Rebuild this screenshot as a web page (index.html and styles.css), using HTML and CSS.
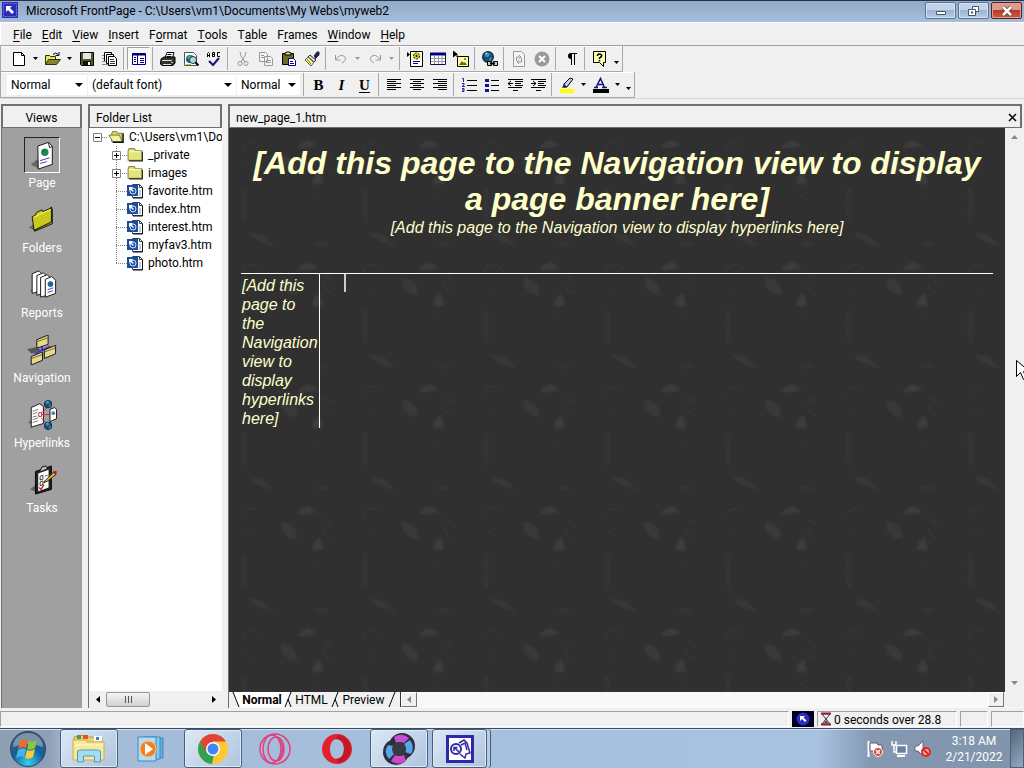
FILE: index.html
```
<!DOCTYPE html>
<html lang="en">
<head>
    <meta charset="UTF-8">
    <meta name="viewport" content="width=device-width, initial-scale=1.0">
    <title>Microsoft FrontPage</title>
    <link rel="stylesheet" href="styles.css">
</head>
<body>
    <!-- shared icons -->
    <svg class="sprite" width="0" height="0" aria-hidden="true">
        <symbol id="arrow" viewBox="0 0 5 3"><path d="M0 0h5L2.5 3z" fill="currentColor"/></symbol>
        <symbol id="fp" viewBox="0 0 16 16"><path d="M0 0h16v16H0z" fill="#2c2cb8"/><path d="M1.500 1.500h13v13h-13z" fill="none" stroke="#7474dc" stroke-dasharray="2 1"/><path d="M4 4h6L8 6l4 4-2 2-4-4-2 2z" fill="#fff"/></symbol>
        <symbol id="folder" viewBox="0 0 16 14"><path d="M1 12V3l1-2h5l1 2h6v9z" fill="#e4e47c" stroke="#8c8c3c"/><path d="M2 4h11" stroke="#ffffd0"/><path d="M2 12.500h12.500V4" fill="none" stroke="#222"/></symbol>
        <symbol id="folder-open" viewBox="0 0 18 14"><path d="M4 12V3l1-2h4l1 2h5v9z" fill="#d8d870" stroke="#777730"/><path d="M1 5h11l3 7H5z" fill="#f2f2a0" stroke="#777730"/><path d="M5 12.500h11V3" fill="none" stroke="#111" stroke-width="1.500"/></symbol>
        <symbol id="htm" viewBox="0 0 17 16"><path d="M5.500 1.500h7l3 3v10h-10z" fill="#fff" stroke="#345"/><path d="M12.500 1.500v3h3" fill="none" stroke="#345"/><path d="M15.500 5v10H6" fill="none" stroke="#111"/><path d="M0 2h11v11H0z" fill="#1c4c9c"/><circle cx="6" cy="8" r="3" fill="none" stroke="#d8e8ff"/><path d="M2 4h4L4.500 5.500 7 8 6 9 3.500 6.500 2 8z" fill="#fff"/><path d="M12 8h2M12 10h2M12 12h2" stroke="#7898c8"/></symbol>
        <symbol id="globe" viewBox="0 0 10 10"><circle cx="5" cy="5" r="4.500" fill="#174a80" stroke="#102a44"/><path d="M2 3l3-2 2 2-2 2H3zM6 6l2-1v2L6 9z" fill="#3a90a0"/><path d="M3 2.500l1-1" stroke="#cff"/></symbol>
    </svg>

    <header class="titlebar">
        <svg class="app-icon" viewBox="0 0 16 16"><use href="#fp"/></svg>
        <h1>Microsoft FrontPage - C:\Users\vm1\Documents\My Webs\myweb2</h1>
        <div class="window-buttons">
            <button aria-label="Minimize"><svg width="12" height="12"><path d="M1.500 6.500h9v3h-9z" fill="#fff" stroke="#45566e"/></svg></button>
            <button aria-label="Restore"><svg width="13" height="12"><path d="M5.500 1.500h6v5h-6z" fill="#fff" stroke="#45566e"/><path d="M1.500 4.500h7v6h-7z" fill="#fff" stroke="#45566e"/><path d="M4 7.500h2" stroke="#45566e" stroke-width="2"/></svg></button>
            <button class="close" aria-label="Close"><svg width="12" height="12"><path d="M2 2l8 8M10 2l-8 8" stroke="#632" stroke-width="4"/><path d="M2 2l8 8M10 2l-8 8" stroke="#fff" stroke-width="2.500"/></svg></button>
        </div>
    </header>

    <nav class="menubar">
        <button><u>F</u>ile</button>
        <button><u>E</u>dit</button>
        <button><u>V</u>iew</button>
        <button><u>I</u>nsert</button>
        <button>F<u>o</u>rmat</button>
        <button><u>T</u>ools</button>
        <button>T<u>a</u>ble</button>
        <button>F<u>r</u>ames</button>
        <button><u>W</u>indow</button>
        <button><u>H</u>elp</button>
    </nav>

    <div class="toolbars">
        <div class="toolbar">
            <button class="tool" aria-label="New page"><svg viewBox="0 0 16 16"><path d="M2.500 1.500h8l3 3v10h-11z" fill="#fff" stroke="#000"/><path d="M10.500 1.500v3h3" fill="none" stroke="#000"/></svg></button>
            <button class="drop" aria-label="New options"><svg><use href="#arrow"/></svg></button>
            <button class="tool" aria-label="Open"><svg viewBox="0 0 16 16"><path d="M.5 13.500v-9h4l1 1h5v3" fill="#e6e65a" stroke="#333300"/><path d="M.5 13.500l3-5h12l-4 5z" fill="#85852a" stroke="#333300"/><path d="M8 3.500q3-3 5 0M14 1v3.500h-3.500" fill="none" stroke="#000"/></svg></button>
            <button class="drop" aria-label="Open options"><svg><use href="#arrow"/></svg></button>
            <button class="tool" aria-label="Save"><svg viewBox="0 0 16 16"><path d="M1.500 1.500h13v13h-12l-1-1z" fill="#55552a" stroke="#000"/><path d="M4 2h8v6H4z" fill="#e4e4e4"/><path d="M4 10h8v4H4z" fill="#111"/><path d="M9 11h2v3H9z" fill="#fff"/></svg></button>
            <button class="tool" aria-label="Publish"><svg viewBox="0 0 16 16"><path d="M2.500 1.500h7v9h-7z" fill="#fff" stroke="#000"/><path d="M4.500 3.500h7v9h-7z" fill="#fff" stroke="#000"/><path d="M6.500 5.500h6l2 2v7h-8z" fill="#fff" stroke="#000"/><path d="M8 8.500h4M8 10.500h5M8 12.500h5" stroke="#335"/><path d="M0 4.500h2M0 7.500h2M0 10.500h4M0 13.500h6" stroke="#888"/></svg></button>
            <span class="sep"></span>
            <button class="tool pressed" aria-label="Folder list"><svg viewBox="0 0 16 16"><path d="M1.500 2.500h13v11h-13z" fill="#fff" stroke="#000080"/><path d="M1 3.500h14" stroke="#000080" stroke-width="2"/><path d="M6.500 4v9M3 6.500h2M3 8.500h2M3 10.500h2M9 7.500h4M9 9.500h4M9 11.500h4" stroke="#000080"/></svg></button>
            <span class="sep"></span>
            <button class="tool" aria-label="Print"><svg viewBox="0 0 16 16"><path d="M5 7l2-5.500h7L12.500 7" fill="#fff" stroke="#000"/><path d="M7.500 3.500h4M7 5.500h4" stroke="#000"/><path d="M1 8l3-2h11v6l-2 2.500H2L.5 13z" fill="#333" stroke="#000"/><path d="M2 9.500h10M3 13.500h8" stroke="#ddd"/><path d="M11 11.500h2" stroke="#dd0"/></svg></button>
            <button class="tool" aria-label="Preview in browser"><svg viewBox="0 0 16 16"><path d="M1.500 1.500h9l3 3v10h-12z" fill="#fff" stroke="#555"/><circle cx="7" cy="8" r="4" fill="#176080"/><path d="M4 6l3-2 2 3-3 2z" fill="#3ab090"/><circle cx="10" cy="9" r="3.500" fill="#a8dce4" stroke="#333"/><path d="M12.500 11.500l3 3" stroke="#000" stroke-width="2"/><path d="M3 13.500h5" stroke="#bb4"/></svg></button>
            <button class="tool" aria-label="Spelling"><svg viewBox="0 0 16 16"><path d="M1.500 6V2.500l1-1 1 1V6M1.500 4.500h2M6.500 1.500v4h2v-4zM6.500 3.500h2M14 1.500h-2.500v4H14" fill="none" stroke="#000"/><path d="M3 10l4 4 6-7" fill="none" stroke="#15157a" stroke-width="2"/></svg></button>
            <span class="sep"></span>
            <button class="tool off" aria-label="Cut"><svg viewBox="0 0 16 16"><g fill="none" stroke="#999"><path d="M5 1l1 4 4 6M11 1l-1 4-4 6"/><circle cx="5" cy="12.500" r="2"/><circle cx="11" cy="12.500" r="2"/></g></svg></button>
            <button class="tool off" aria-label="Copy"><svg viewBox="0 0 16 16"><path d="M1.500 1.500h6l2 2v7h-8zM6.500 5.500h6l2 2v7h-8zM3 4.500h3M3 6.500h3M8 9.500h5M8 11.500h5" fill="#f4f4f4" stroke="#999"/></svg></button>
            <button class="tool" aria-label="Paste"><svg viewBox="0 0 16 16"><path d="M1.500 2.500h11v11h-11z" fill="#6b6b28" stroke="#000"/><path d="M4 4V2l2-1h2l2 1v2z" fill="#dddd80" stroke="#000"/><path d="M7.500 7.500h5l2 2v5h-7z" fill="#fff" stroke="#000080"/><path d="M9 10.500h3M9 12.500h4" stroke="#000080"/></svg></button>
            <button class="tool" aria-label="Format painter"><svg viewBox="0 0 16 16"><path d="M10 5l3-4h2v3l-4 4" fill="#224" stroke="#224"/><path d="M6 4l6 5-2 2-6-5z" fill="#ddd" stroke="#333"/><path d="M4 6l6 5-3 4-6-6z" fill="#ffff8a" stroke="#555"/><path d="M3 8l4 5M5 7l4 4" stroke="#777730"/></svg></button>
            <span class="sep"></span>
            <button class="tool off" aria-label="Undo"><svg viewBox="0 0 16 16"><path d="M2.500 4v5h5M3 8q5-6 9-2 2 3-3 6" fill="none" stroke="#999"/></svg></button>
            <button class="drop off" aria-label="Undo list"><svg><use href="#arrow"/></svg></button>
            <button class="tool off" aria-label="Redo"><svg viewBox="0 0 16 16"><path d="M13.500 4v5h-5M13 8Q8 2 4 6q-2 3 3 6" fill="none" stroke="#999"/></svg></button>
            <button class="drop off" aria-label="Redo list"><svg><use href="#arrow"/></svg></button>
            <span class="sep"></span>
            <button class="tool" aria-label="Insert component"><svg viewBox="0 0 16 16"><path d="M3.500.5h12v15h-12z" fill="#fff" stroke="#000"/><path d="M0 1l3 2.500L0 6z"/><path d="M5 2h9v6H5z" fill="#ffff90"/><circle cx="9.500" cy="5" r="3" fill="#dddd20" stroke="#000" stroke-dasharray="2 1"/><circle cx="9.500" cy="5" r="1"/><path d="M6 10.500h7M6 12.500h5" stroke="#000080"/></svg></button>
            <button class="tool" aria-label="Insert table"><svg viewBox="0 0 16 16"><path d="M.5 2.500h15v11H.5z" fill="#fff" stroke="#111144"/><path d="M0 3h16" stroke="#000080" stroke-width="3"/><path d="M1 7.500h14M1 10.500h14M4.500 5v8M8.500 5v8M12 5v8" stroke="#999"/></svg></button>
            <button class="tool" aria-label="Insert picture"><svg viewBox="0 0 16 16"><path d="M0 0l4 3-4 3zM4 3v3" stroke="#000"/><path d="M4.500 5.500h11v10h-11z" fill="#ffffa0" stroke="#000"/><path d="M6 14l3-4 2 2 1-1 2 3z" fill="#666622"/><circle cx="12" cy="8" r="1" fill="#666622"/></svg></button>
            <span class="sep"></span>
            <button class="tool" aria-label="Hyperlink"><svg viewBox="0 0 16 16"><use href="#globe" x="0" y="0" width="12" height="12"/><path d="M5.500 10.500h4v4h-4zM11.500 10.500h4v4h-4z" fill="#ccc" stroke="#000"/><path d="M8 12.500h5" stroke="#000" stroke-width="2"/></svg></button>
            <span class="sep"></span>
            <button class="tool off" aria-label="Refresh"><svg viewBox="0 0 16 16"><path d="M2.500.5h8l3 3v12h-11z" fill="#f4f4f4" stroke="#999"/><path d="M5.500 10V6h4M8 4l2 2-2 2M10.500 7v4h-4M8 9l-2 2 2 2" fill="none" stroke="#999"/></svg></button>
            <button class="tool off" aria-label="Stop"><svg viewBox="0 0 16 16"><circle cx="8" cy="8" r="7.500" fill="#999"/><path d="M5 5l6 6M11 5l-6 6" stroke="#fff" stroke-width="2"/></svg></button>
            <span class="sep"></span>
            <button class="tool" aria-label="Show all"><svg viewBox="0 0 16 16"><path d="M7 2h7v1H7z"/><path d="M8 2a3 3 0 000 6z"/><path d="M8.500 2v12M11.500 2v12" stroke="#000"/></svg></button>
            <span class="sep"></span>
            <button class="tool" aria-label="Help"><svg viewBox="0 0 16 16"><path d="M1.500.500h12v11h-2v4l-4-4h-6z" fill="#ffffb0" stroke="#000"/><path d="M5.500 5V4q2-2 4 0 1 1-2 3V8M7.500 9v1.500" fill="none" stroke="#000" stroke-width="1.500"/></svg></button>
            <button class="drop more" aria-label="More buttons"><svg><use href="#arrow"/></svg></button>
        </div>

        <div class="toolbar">
            <label class="combo style"><select aria-label="Style"><option>Normal</option></select></label>
            <label class="combo font"><select aria-label="Font"><option>(default font)</option></select></label>
            <label class="combo size"><select aria-label="Font size"><option>Normal</option></select></label>
            <span class="sep"></span>
            <button class="tool letter"><b>B</b></button>
            <button class="tool letter"><i>I</i></button>
            <button class="tool letter"><u>U</u></button>
            <span class="sep"></span>
            <button class="tool" aria-label="Align left"><svg viewBox="0 0 16 16"><path d="M1 2.500h14M1 4.500h9M1 6.500h14M1 8.500h9M1 10.500h14M1 12.500h9" stroke="#000"/></svg></button>
            <button class="tool" aria-label="Center"><svg viewBox="0 0 16 16"><path d="M1 2.500h14M4 4.500h8M1 6.500h14M4 8.500h8M1 10.500h14M4 12.500h8" stroke="#000"/></svg></button>
            <button class="tool" aria-label="Align right"><svg viewBox="0 0 16 16"><path d="M1 2.500h14M6 4.500h9M1 6.500h14M6 8.500h9M1 10.500h14M6 12.500h9" stroke="#000"/></svg></button>
            <span class="sep"></span>
            <button class="tool" aria-label="Numbering"><svg viewBox="0 0 16 16"><path d="M6 3.500h10M6 8.500h10M6 13.500h10" stroke="#000"/><path d="M1 1.500h1.500V5M1 6.500h2v1.500l-2 1.500h3M1 11.500h2v3H1M1 13h2" fill="none" stroke="#2525a8"/></svg></button>
            <button class="tool" aria-label="Bullets"><svg viewBox="0 0 16 16"><path d="M7 3.500h8M7 8.500h8M7 13.500h8" stroke="#000"/><path d="M1 2h4v3H1zM1 7h4v3H1zM1 12h4v3H1z" fill="#15158a"/></svg></button>
            <button class="tool" aria-label="Decrease indent"><svg viewBox="0 0 16 16"><path d="M1 2.500h15M8 4.500h8M8 6.500h6M8 8.500h8M1 10.500h14M6 13.500h5" stroke="#000"/><path d="M1 6.500h5M4 4L1 6.500 4 9" fill="none" stroke="#000"/></svg></button>
            <button class="tool" aria-label="Increase indent"><svg viewBox="0 0 16 16"><path d="M1 2.500h15M8 4.500h8M8 6.500h6M8 8.500h8M1 10.500h14M6 13.500h5" stroke="#000"/><path d="M1 6.500h5M3 4l3 2.500L3 9" fill="none" stroke="#000"/></svg></button>
            <span class="sep"></span>
            <button class="tool" aria-label="Highlight"><svg viewBox="0 0 16 16"><path d="M1 12h14v4H1z" fill="#ffff00"/><path d="M5 7l6-6 3 1-6 8H5z" fill="#c8c8e8" stroke="#000"/><path d="M5 7l3 3-5 1z" fill="#222244"/></svg></button>
            <button class="drop" aria-label="Highlight colors"><svg><use href="#arrow"/></svg></button>
            <button class="tool" aria-label="Font color"><svg viewBox="0 0 16 16"><path d="M0 12h16v4H0z"/><path d="M3 10.500l4.500-9 4 9M5 7.500h5M1 10.500h4M9 10.500h5" fill="none" stroke="#15157a" stroke-width="1.500"/></svg></button>
            <button class="drop" aria-label="Font colors"><svg><use href="#arrow"/></svg></button>
            <button class="drop more" aria-label="More buttons"><svg><use href="#arrow"/></svg></button>
        </div>
    </div>

    <main class="workspace">
        <aside class="views">
            <h2 class="pane-title">Views</h2>
            <button class="view active"><svg viewBox="0 0 32 32"><path d="M4 26l8-6v10z" fill="#666"/><path d="M11.500 6.500L23 2.500l4 4V26l-15 5z" fill="#fff" stroke="#111"/><path d="M23 3l1 5 3-1" fill="none" stroke="#111"/><circle cx="19" cy="13" r="4" fill="#208850"/><path d="M16 12l3-2 1 3z" fill="#225aa8"/><path d="M14 22l10-3M14 25l7-2" stroke="#3a3aa8"/></svg>Page</button>
            <button class="view"><svg viewBox="0 0 32 32"><path d="M2 24l8-5v9z" fill="#666"/><path d="M6.500 13L24 6l2-4 1 3v15L8 28z" fill="#8e8e10" stroke="#111"/><path d="M5.500 12.500L9 11l1-3 6-3 1 2 9-4v15L7.500 27z" fill="#c8c81e" stroke="#111"/><path d="M7 13l18-8" stroke="#ffff70"/></svg>Folders</button>
            <button class="view"><svg viewBox="0 0 32 32"><path d="M3 22l8-5v8z" fill="#666"/><g fill="#fff" stroke="#111"><path d="M5.500 4l7-3 3 3v18l-10 3z"/><path d="M10.500 6l7-3 3 3v18l-10 3z"/><path d="M14.500 8l7-3 3 3v18l-10 3z"/><path d="M19.500 10l7-3 4 4v14l-11 4z"/></g><circle cx="25" cy="15" r="3" fill="#2860a0"/><path d="M22 21l6-2M22 24l6-2" stroke="#3a3aa8"/></svg>Reports</button>
            <button class="view"><svg viewBox="0 0 32 32"><path d="M0 15l10-2 5 3-10 4z" fill="#555"/><path d="M8 20l17-8M16 10v7" stroke="#4430d0" stroke-width="2"/><g fill="#e4da88" stroke="#111"><path d="M10.500 5l12-5v10l-12 4z"/><path d="M4.500 23l12-5v9l-12 5z"/><path d="M18.500 16l12-5v9l-12 5z"/></g><path d="M11 7l11-4M5 25l11-4M19 18l11-4" stroke="#66602a"/></svg>Navigation</button>
            <button class="view"><svg viewBox="0 0 32 32"><path d="M1 24l7-5v8z" fill="#666"/><path d="M4.500 8l9-4 4 3v18l-13 4z" fill="#fff" stroke="#111"/><path d="M6 12l6-2M6 15l5-2M6 18l5-1M6 21l6-2M6 24l6-2" stroke="#777"/><path d="M12.500 13.500h3v4h-3zM16 15.500h9M15 14l7-6M15 19l6 6" fill="none" stroke="#cc2840"/><path d="M24.500 10l5-2 2 2v10l-7 3z" fill="#fff" stroke="#111"/><circle cx="28" cy="14" r="2" fill="#4a80b8"/><use href="#globe" x="18" y="0" width="9" height="9"/><use href="#globe" x="18" y="23" width="9" height="9"/></svg>Hyperlinks</button>
            <button class="view"><svg viewBox="0 0 32 32"><path d="M3 26l8-6v9z" fill="#666"/><path d="M9 7l17-6v25L9 31z" fill="#222" stroke="#000"/><path d="M12 9l11-4v19l-11 4z" fill="#fff"/><path d="M14 6l2-4 4-1 2 3-7 3z" fill="#bbb" stroke="#111"/><path d="M14 12l3-1v4l-3 1zM14 18l3-1v4l-3 1z" fill="none" stroke="#333"/><path d="M19 12l3-1M19 18l2-1" stroke="#555"/><path d="M13 24l2 2 3-5" fill="none" stroke="#d02020" stroke-width="1.500"/><path d="M19 17l9-9 3 2-9 7-4 2z" fill="#e8b820" stroke="#222"/><path d="M27 8l2-2 3 1-1 3z" fill="#b02030"/></svg>Tasks</button>
        </aside>

        <section class="folders">
            <h2 class="pane-title">Folder List</h2>
            <ul class="tree">
                <li class="root"><svg class="lines" viewBox="0 0 16 18"><path d="M10 9.500h6" class="dots"/><path d="M1.500 5.500h8v8h-8z" class="box"/><path d="M3 9.500h5" stroke="#000"/></svg><svg class="file-icon" viewBox="0 0 18 14"><use href="#folder-open"/></svg><span>C:\Users\vm1\Do</span></li>
                <li><svg class="lines" viewBox="0 0 16 18"><path d="M5.500 0v18M5 9.500h11" class="dots"/><path d="M1.500 5.500h8v8h-8z" class="box"/><path d="M3 9.500h5M5.500 7v5" stroke="#000"/></svg><svg class="file-icon" viewBox="0 0 16 14"><use href="#folder"/></svg><span>_private</span></li>
                <li><svg class="lines" viewBox="0 0 16 18"><path d="M5.500 0v18M5 9.500h11" class="dots"/><path d="M1.500 5.500h8v8h-8z" class="box"/><path d="M3 9.500h5M5.500 7v5" stroke="#000"/></svg><svg class="file-icon" viewBox="0 0 16 14"><use href="#folder"/></svg><span>images</span></li>
                <li><svg class="lines" viewBox="0 0 16 18"><path d="M5.500 0v18M5 9.500h11" class="dots"/></svg><svg class="file-icon" viewBox="0 0 17 16"><use href="#htm"/></svg><span>favorite.htm</span></li>
                <li><svg class="lines" viewBox="0 0 16 18"><path d="M5.500 0v18M5 9.500h11" class="dots"/></svg><svg class="file-icon" viewBox="0 0 17 16"><use href="#htm"/></svg><span>index.htm</span></li>
                <li><svg class="lines" viewBox="0 0 16 18"><path d="M5.500 0v18M5 9.500h11" class="dots"/></svg><svg class="file-icon" viewBox="0 0 17 16"><use href="#htm"/></svg><span>interest.htm</span></li>
                <li><svg class="lines" viewBox="0 0 16 18"><path d="M5.500 0v18M5 9.500h11" class="dots"/></svg><svg class="file-icon" viewBox="0 0 17 16"><use href="#htm"/></svg><span>myfav3.htm</span></li>
                <li><svg class="lines" viewBox="0 0 16 18"><path d="M5.500 0v9M5 9.500h11" class="dots"/></svg><svg class="file-icon" viewBox="0 0 17 16"><use href="#htm"/></svg><span>photo.htm</span></li>
            </ul>
            <div class="scroll-x">
                <button aria-label="Scroll left"><svg width="4" height="7"><path d="M4 0v7L0 3.500z"/></svg></button>
                <div class="thumb"><svg width="9" height="7"><path d="M1.500 0v7M4.500 0v7M7.500 0v7" stroke="#555"/></svg></div>
                <button aria-label="Scroll right"><svg width="4" height="7"><path d="M0 0v7l4-3.500z"/></svg></button>
            </div>
        </section>

        <section class="editor">
            <div class="pane-title file-title"><h2>new_page_1.htm</h2><button aria-label="Close page"><svg width="9" height="9"><path d="M1 1l7 7M8 1L1 8" stroke="#000" stroke-width="1.500"/></svg></button></div>
            <div class="canvas">
                <article class="page">
                    <svg class="texture" aria-hidden="true">
                        <defs>
                            <filter id="soft"><feGaussianBlur stdDeviation="1"/></filter>
                            <pattern id="rock" width="121" height="122" patternUnits="userSpaceOnUse">
                                <g fill="#4a4a4a" opacity=".5" filter="url(#soft)">
                                    <path d="M52 28l8 1 7 7 1 9-7-1-8-7z" opacity=".7"/>
                                    <path d="M83 56l2-8 6-5 3 13z"/>
                                    <path d="M68 20l6-6 6-2 9 6-12 2z" opacity=".9"/>
                                    <path d="M20 104l14 3 12 12-12-4-12-6z" opacity=".6"/>
                                    <path d="M12 60h6v34h-5z" opacity=".3"/>
                                    <path d="M84 116l10-2 8 2-8 3z" opacity=".4"/>
                                    <path d="M92 24l8 2 7 8-7-4z" opacity=".4"/>
                                </g>
                                <path d="M13 22l3-6 9-2 6 6M94 34l3 7 5 2M17 37l6 5M87 68l3 1" fill="none" stroke="#484848" stroke-dasharray="3 2" opacity=".5"/>
                            </pattern>
                        </defs>
                        <rect width="100%" height="100%" fill="url(#rock)"/>
                    </svg>
                    <h3 class="banner">[Add this page to the Navigation view to display a page banner here]</h3>
                    <p class="links">[Add this page to the Navigation view to display hyperlinks here]</p>
                    <div class="columns">
                        <p class="side">[Add this page to the Navigation view to display hyperlinks here]</p>
                        <div class="body-cell"><span class="caret"></span></div>
                    </div>
                </article>
                <div class="scroll-y">
                    <svg width="7" height="4"><path d="M0 4h7L3.500 0z"/></svg>
                    <svg width="7" height="4"><path d="M0 0h7L3.500 4z"/></svg>
                </div>
            </div>
            <div class="tabs">
                <svg class="edge" viewBox="0 0 10 15"><path d="M2 0l6 15h2V0z" fill="#fff"/><path d="M2 0l6 15" stroke="#000"/></svg>
                <button class="tab current">Normal</button>
                <svg class="edge" viewBox="0 0 10 15"><path d="M0 0h8L2 15H0z" fill="#fff"/><path d="M8 0L2 15M5 7l3 8" stroke="#000"/></svg>
                <button class="tab">HTML</button>
                <svg class="edge" viewBox="0 0 10 15"><path d="M8 0L2 15M5 7l3 8" stroke="#000"/></svg>
                <button class="tab preview">Preview</button>
                <svg class="edge" viewBox="0 0 10 15"><path d="M8 0L2 15" stroke="#000"/></svg>
                <div class="page-scroll">
                    <button aria-label="Scroll page left"><svg width="4" height="7"><path d="M4 0v7L0 3.500z" fill="#888"/></svg></button>
                    <button aria-label="Scroll page right"><svg width="4" height="7"><path d="M0 0v7l4-3.500z" fill="#888"/></svg></button>
                </div>
            </div>
        </section>
    </main>

    <footer class="status">
        <div class="cell message"></div>
        <div class="cell logo"><svg width="14" height="14" viewBox="0 0 14 14"><circle cx="7" cy="7" r="6.500" fill="#2c2cc0"/><path d="M4 4h5L7.500 5.500l3 3-1.500 1.500-3-3L4 9z" fill="#fff"/></svg></div>
        <div class="cell speed"><svg width="12" height="14" viewBox="0 0 12 14"><path d="M2 2l4 5-4 5h8L6 7l4-5z" fill="#fff" stroke="#333"/><path d="M1 1.500h10M1 12.500h10" stroke="#981c38" stroke-width="2"/><path d="M4 11l2-3 2 3z" fill="#444"/></svg>0 seconds over 28.8</div>
        <div class="cell blank"></div>
        <div class="cell grip"></div>
    </footer>

    <div class="taskbar">
        <button class="start" aria-label="Start"><svg width="38" height="38" viewBox="0 0 38 38">
            <defs><radialGradient id="orb" cx=".5" cy=".9" r=".9"><stop offset="0" stop-color="#38d0f0"/><stop offset=".5" stop-color="#13619c"/><stop offset="1" stop-color="#42586e"/></radialGradient></defs>
            <circle cx="19" cy="19" r="17.500" fill="url(#orb)" stroke="#294664"/><path d="M4 17a15 14 0 0130 0q-15-6-30 0z" fill="#fff" opacity=".35"/>
            <path d="M11 11q4-3 8-1l-2 8q-4-2-8 1z" fill="#f06a28"/><path d="M20 11q4 2 8-1l-2 8q-4 3-8 1z" fill="#8cc83c"/><path d="M9 20q4-3 8-1l-2 8q-4-2-8 1z" fill="#4ab0f0"/><path d="M18 20q4 2 8-1l-2 8q-4 3-8 1z" fill="#fccc34"/></svg></button>
        <button class="task open" aria-label="Explorer"><svg width="34" height="32" viewBox="0 0 34 32"><path d="M2 4l8-2 2 2h18v22H2z" fill="#e8d070" stroke="#b89838"/><path d="M5 2h4v4H5z" fill="#4a9a50"/><path d="M11 2h5v4h-5z" fill="#e85030"/><path d="M22 3h8v5h-8z" fill="#fff"/><path d="M24 4h3v3h-3z" fill="#4080d0"/><path d="M1 7h12l2 2h17v18H1z" fill="#f8e898" stroke="#ccac50"/><path d="M3 12h28" stroke="#fffbd0"/><path d="M5.500 29V18l3-1h17l3 1v11h-6v-6h-11v6z" fill="#a4dcf0" stroke="#4a9cc4"/></svg></button>
        <button class="task" aria-label="Media Player"><svg width="30" height="28" viewBox="0 0 30 28"><path d="M11 3h16v20H11z" fill="#68b0dc" stroke="#3c88bc"/><path d="M8 2h16v22H8z" fill="#8cc8ec" stroke="#3c88bc"/><path d="M2 2h18v24H2z" fill="#b0dcf4" stroke="#3c88bc"/><circle cx="12" cy="14" r="8" fill="#f08020" stroke="#fcc080"/><path d="M9 8v12l8-6z" fill="#fff"/></svg></button>
        <button class="task open" aria-label="Chrome"><svg width="32" height="32" viewBox="0 0 32 32"><circle cx="16" cy="16" r="15" fill="#fcc934"/><path d="M3 8.500A15 15 0 0129 8.500H16l-6.500 11z" fill="#e04434"/><path d="M3 8.500l7 11 7 2-2 9.500A15 15 0 013 8.500z" fill="#34a050"/><circle cx="16" cy="16" r="7" fill="#fff"/><circle cx="16" cy="16" r="5.500" fill="#4285f4"/></svg></button>
        <button class="task" aria-label="Opera GX"><svg width="34" height="34" viewBox="0 0 34 34"><g fill="none" stroke="#e0407c" stroke-width="1.500"><circle cx="17" cy="17" r="15"/><ellipse cx="14" cy="17" rx="9" ry="14"/><ellipse cx="18" cy="17" rx="8" ry="12"/><path d="M20 6q9 11 0 22"/></g></svg></button>
        <button class="task" aria-label="Opera"><svg width="32" height="32" viewBox="0 0 32 32"><path d="M16 1a15 15 0 100 30 15 15 0 100-30zm0 5c4 0 7 4 7 10s-3 10-7 10-7-4-7-10 3-10 7-10z" fill="#e4202c" fill-rule="evenodd"/><path d="M20 2a15 15 0 010 28q-3 1-5-4 8-1 8-10t-8-10q2-5 5-4z" fill="#c41824"/></svg></button>
        <button class="task open" aria-label="Recorder"><svg width="34" height="34" viewBox="0 0 34 34"><circle cx="14" cy="20" r="13" fill="#2b2f3c"/><circle cx="20" cy="14" r="13" fill="#2b2f3c"/><path d="M12 5q8-5 15 1l-5 5q-4-2-8 0z" fill="#c850d4"/><path d="M28 8q5 7 1 14l-6-2q2-4-1-8z" fill="#58a4e8"/><path d="M22 23l2 6q-8 5-15 0l4-6q4 2 9 0z" fill="#d048c8"/><path d="M6 13q-5 7 1 14l5-5q-2-4 0-8z" fill="#58a4e8"/><circle cx="17" cy="17" r="7" fill="#363a40"/></svg></button>
        <button class="task open stacked" aria-label="FrontPage"><svg width="28" height="28" viewBox="0 0 28 28"><path d="M1.500 1.500h25v25h-25z" fill="#fff" stroke="#3028ac" stroke-width="3"/><path d="M13 8l5-3 3 3 3 10-4 1-1 4-5-4" fill="#fff" stroke="#3028ac" stroke-width="1.500"/><path d="M15 10l4-2 2 7" fill="none" stroke="#3028ac" stroke-width="1.500"/><circle cx="10" cy="14" r="5" fill="#fff" stroke="#3028ac" stroke-width="2"/><path d="M8 12l5 5M7.500 12.500h4M8 12v4" stroke="#3028ac" stroke-width="1.500"/></svg></button>
        <div class="tray">
            <svg width="18" height="18" viewBox="0 0 18 18"><path d="M2.500 1v16" stroke="#fff" stroke-width="2"/><path d="M4 3h7l1 2h4v6H4z" fill="#fff" stroke="#56606c"/><circle cx="12" cy="12" r="4.500" fill="#e03c30" stroke="#fff"/><path d="M10 10l4 4M14 10l-4 4" stroke="#fff" stroke-width="1.500"/></svg>
            <svg width="18" height="18" viewBox="0 0 18 18"><path d="M6.500 5.500h10v8h-10z" fill="#68809c" stroke="#fff" stroke-width="1.500"/><path d="M7 16h8" stroke="#fff" stroke-width="2"/><path d="M2 1v4h4V1M4 5v7h3" fill="none" stroke="#fff" stroke-width="1.500"/></svg>
            <svg width="18" height="18" viewBox="0 0 18 18"><path d="M1 6h3l5-5v15l-5-5H1z" fill="#fff" stroke="#667"/><circle cx="12" cy="12" r="4" fill="#f4b0a8" stroke="#e02820" stroke-width="2"/><path d="M9 9l6 6" stroke="#e02820" stroke-width="2"/></svg>
        </div>
        <time class="clock" datetime="2022-02-21T03:18">3:18 AM<br>2/21/2022</time>
        <button class="show-desktop" aria-label="Show desktop"></button>
    </div>

    <svg class="pointer" width="14" height="21" viewBox="0 0 14 21"><path d="M.5.500v16l4-4 3 7 3-1-3-7h6z" fill="#fff" stroke="#000"/></svg>
</body>
</html>
```
FILE: styles.css
```
* {
    box-sizing: border-box;
}
body {
    margin: 0;
    height: 100vh;
    display: flex;
    flex-direction: column;
    overflow: hidden;
    background: #f0f0f0;
    color: #000;
    font-family: Roboto, "Noto Sans", sans-serif;
    font-size: 12px;
    line-height: 16px;
}
h1, h2, h3, p, ul {
    margin: 0;
    padding: 0;
    font-size: inherit;
    font-weight: normal;
}
button, select {
    margin: 0;
    padding: 0;
    border: none;
    background: none;
    color: inherit;
    font: inherit;
}
button {
    display: flex;
    align-items: center;
    justify-content: center;
}
svg {
    display: block;
    flex: none;
}
.sprite {
    position: absolute;
}

/* title bar */
.titlebar {
    display: flex;
    flex: none;
    height: 22px;
    padding: 0 2px;
    border-top: 1px solid #24344f;
    background: linear-gradient(#93a9c6, #a5bedb);
}
.app-icon {
    width: 16px;
    height: 16px;
    margin-top: 1px;
}
.titlebar h1 {
    flex: 1;
    padding: 2px 8px;
    white-space: nowrap;
}
.window-buttons {
    display: flex;
    gap: 2px;
    padding-top: 1px;
}
.window-buttons button {
    width: 31px;
    height: 17px;
    border: 1px solid #5c7290;
    border-radius: 2px;
    background: linear-gradient(#c3d3e7 45%, #9cb4d0 50%, #b4cae4);
    box-shadow: inset 0 0 0 1px #d4e2f2;
}
.window-buttons .close {
    border-color: #5c2020;
    background: linear-gradient(#dd9a8c 45%, #b8392a 50%, #c85c46);
    box-shadow: inset 0 0 0 1px #e0a090;
}

/* menus and toolbars */
.menubar {
    display: flex;
    flex: none;
    gap: 10px;
    height: 24px;
    padding: 2px 13px 0;
    border-top: 1px solid #fff;
    border-bottom: 1px solid #a0a0a0;
    box-shadow: inset 1px 0 #fff;
}
.menubar u, .letter u {
    text-underline-offset: 2px;
}
.toolbars {
    flex: none;
    border-bottom: 1px solid #d8d8d8;
}
.toolbar {
    display: flex;
    align-items: center;
    width: max-content;
    height: 26px;
    padding-left: 6px;
    border: solid #a8a8a8;
    border-width: 0 1px 1px;
    box-shadow: inset 0 1px #fff;
}
.tool {
    width: 23px;
    height: 23px;
}
.tool svg {
    width: 16px;
    height: 16px;
}
.pressed {
    border: 1px solid;
    border-color: #a0a0a0 #fff #fff #a0a0a0;
    background: #f8f8f8;
}
.drop {
    width: 11px;
    height: 23px;
}
.drop svg {
    width: 5px;
    height: 3px;
}
.off {
    color: #999;
}
.more {
    padding-top: 8px;
}
.sep {
    width: 1px;
    height: 23px;
    margin: 0 3px 0 2px;
    background: #a8a8a8;
}
.combo {
    display: grid;
    align-items: center;
    height: 20px;
    margin-right: 1px;
    background: #fff;
}
.combo select, .combo::after {
    grid-area: 1 / 1;
}
.combo::after {
    content: "";
    justify-self: end;
    margin-right: 4px;
    border: solid transparent;
    border-width: 4px 4px 0;
    border-top-color: #000;
}
.combo select {
    width: 100%;
    padding-left: 4px;
    appearance: none;
}
.style {
    width: 80px;
}
.font {
    width: 148px;
}
.size {
    width: 63px;
}
.letter {
    font-family: "Liberation Serif", serif;
    font-size: 15px;
    font-weight: bold;
}

/* panes */
.workspace {
    display: flex;
    flex: 1;
    min-height: 0;
    padding: 5px 0 3px;
}
.pane-title {
    flex: none;
    height: 24px;
    padding: 4px 6px 0;
    border: 1px solid #707070;
    border-width: 2px 2px 1px 1px;
    background: #f0f0f0;
}
.views {
    display: flex;
    flex-direction: column;
    align-items: center;
    width: 81px;
    margin: 0 6px 0 1px;
    border-left: 1px solid #707070;
    background: #a0a0a0;
    color: #fff;
}
.views .pane-title {
    align-self: stretch;
    margin-bottom: 9px;
    color: #000;
    text-align: center;
}
.view {
    flex-direction: column;
    justify-content: flex-start;
    width: 80px;
    height: 65px;
    gap: 2px;
}
.view svg {
    width: 36px;
    height: 36px;
    padding: 2px;
    border: 1px solid transparent;
}
.active svg {
    border-color: #222 #fff #fff #222;
}
.folders {
    display: flex;
    flex-direction: column;
    width: 134px;
    margin-right: 6px;
    border-left: 1px solid #707070;
    background: #fff;
}
.tree {
    flex: 1;
    min-height: 0;
    overflow: hidden;
    list-style: none;
}
.tree li {
    display: flex;
    align-items: center;
    height: 18px;
    padding-left: 22px;
    white-space: nowrap;
}
.tree .root {
    padding-left: 3px;
}
.lines {
    width: 16px;
    height: 18px;
}
.dots {
    fill: none;
    stroke: #808080;
    stroke-dasharray: 1 1;
}
.box {
    fill: #fff;
    stroke: #808080;
}
.file-icon {
    width: 17px;
    height: 16px;
    margin-right: 4px;
}
.scroll-x {
    display: flex;
    flex: none;
    align-items: center;
    height: 17px;
    background: #f0f0f0;
}
.scroll-x button {
    width: 17px;
    height: 17px;
}
.thumb {
    display: flex;
    align-items: center;
    justify-content: center;
    width: 44px;
    height: 15px;
    margin-right: auto;
    border: 1px solid #979797;
    border-radius: 2px;
    background: linear-gradient(#f4f4f4, #d0d0d0);
}

/* page editor */
.editor {
    display: flex;
    flex: 1;
    flex-direction: column;
    min-width: 0;
    border-left: 1px solid #707070;
}
.file-title {
    display: flex;
    justify-content: space-between;
    align-items: flex-start;
    margin-right: 2px;
    padding-right: 3px;
}
.file-title button {
    height: 14px;
}
.canvas {
    display: flex;
    flex: 1;
    min-height: 0;
}
.page {
    position: relative;
    flex: 1;
    min-width: 0;
    padding: 17px 12px;
    overflow: hidden;
    background: #303030;
    color: #ffffcc;
    font-family: "Liberation Sans", Arial, sans-serif;
    font-size: 16px;
    font-style: italic;
    line-height: 19px;
}
.texture {
    position: absolute;
    inset: 0;
    width: 100%;
    height: 100%;
}
.banner, .links, .columns {
    position: relative;
}
.banner {
    font-size: 32px;
    font-weight: bold;
    line-height: 36px;
    text-align: center;
}
.links {
    padding: 1px 0 36px;
    text-align: center;
}
.columns {
    display: flex;
    border-top: 1px solid #fff;
}
.side {
    width: 79px;
    padding: 2px 0 0 1px;
    border-right: 1px solid #fff;
}
.body-cell {
    flex: 1;
    padding-left: 24px;
}
.caret {
    display: block;
    width: 2px;
    height: 18px;
    background: #ccc;
}
.scroll-y {
    display: flex;
    flex-direction: column;
    align-items: center;
    justify-content: space-between;
    width: 19px;
    padding: 7px 0;
    fill: #888;
}
.tabs {
    display: flex;
    flex: none;
    height: 16px;
    padding-left: 2px;
    border-bottom: 1px solid #f8f8f8;
}
.edge {
    width: 10px;
    height: 15px;
}
.tab {
    width: 37px;
}
.current {
    width: 42px;
    background: #fff;
    font-weight: bold;
}
.preview {
    width: 47px;
}
.page-scroll {
    display: flex;
    flex: 1;
    justify-content: space-between;
    margin: 0 20px 0 3px;
    border-left: 1px solid #333;
    background: #f8f8f8;
}
.page-scroll button {
    width: 16px;
    border: 1px solid;
    border-color: #fff #777 #777 #fff;
    background: #f0f0f0;
}

/* status bar */
.status {
    display: flex;
    flex: none;
    gap: 3px;
    height: 17px;
}
.cell {
    height: 16px;
    border: 1px solid;
    border-color: #a0a0a0 #fff #fff #a0a0a0;
}
.message {
    flex: 1;
}
.logo {
    display: flex;
    justify-content: center;
    width: 22px;
    background: #000022;
    border-color: #000022;
}
.speed {
    display: flex;
    gap: 2px;
    width: 140px;
    padding-left: 2px;
}
.blank {
    width: 28px;
}
.grip {
    width: 33px;
}

/* taskbar */
.taskbar {
    display: flex;
    flex: none;
    align-items: center;
    gap: 4px;
    height: 40px;
    border-top: 1px solid #334c6c;
    background: linear-gradient(90deg, #90a0b4 50px, #a4bcd8 66px, #a8c2e0 80%, #8498b2 85%, #8094ac);
    box-shadow: inset 0 1px #d4e2f2;
}
.start {
    width: 56px;
    height: 39px;
}
.task {
    width: 58px;
    height: 39px;
}
.open {
    border: 1px solid #44607f;
    border-radius: 3px;
    background: linear-gradient(135deg, #dde8f4, #aec4de);
    box-shadow: inset 0 0 0 1px #e0ebf6;
}
.stacked {
    width: 55px;
    box-shadow: inset 0 0 0 1px #e0ebf6, 3px 0 #b8cce2, 4px 0 #44607f;
}
.tray {
    display: flex;
    gap: 6px;
    margin: 0 6px 0 auto;
}
.clock {
    width: 64px;
    color: #fff;
    text-align: center;
}
.show-desktop {
    width: 14px;
    height: 39px;
    border: 1px solid #4c6078;
    background: linear-gradient(135deg, #55677c, #93a8c0);
}
.pointer {
    position: absolute;
    right: -6px;
    top: 360px;
}
```
